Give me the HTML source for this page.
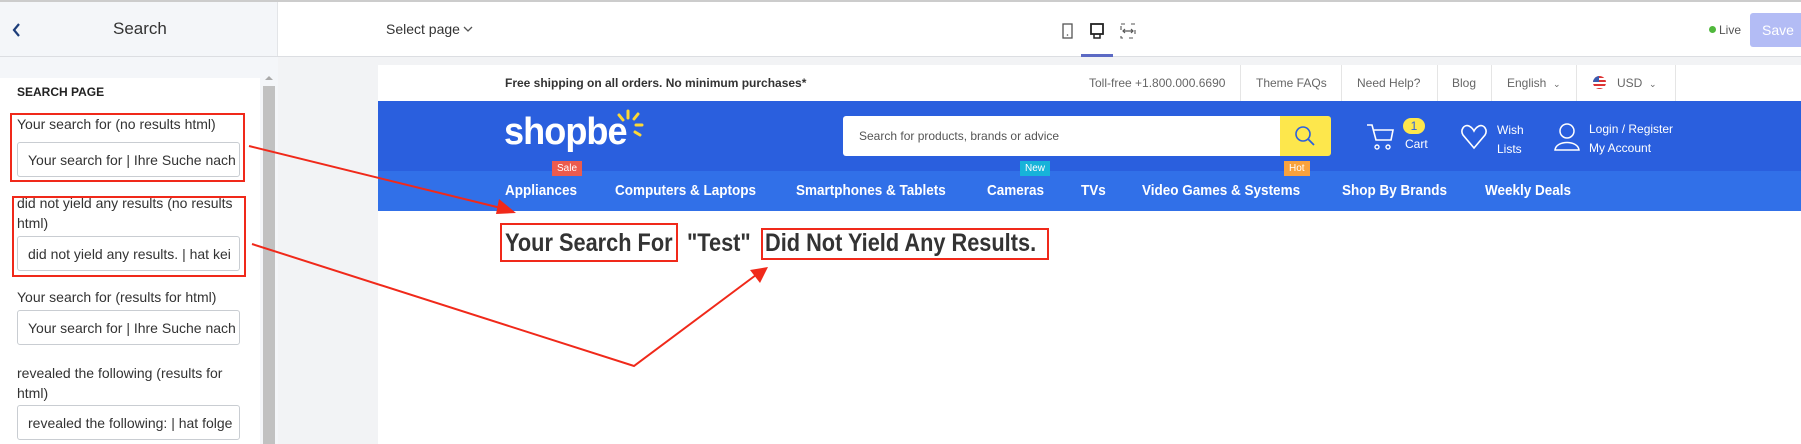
<!DOCTYPE html>
<html><head><meta charset="utf-8"><style>
*{margin:0;padding:0;box-sizing:border-box}
body{width:1801px;height:444px;overflow:hidden;position:relative;font-family:"Liberation Sans",Arial,sans-serif;background:#fff;color:#222}
.a{position:absolute;white-space:nowrap}
.lbl{font-size:14px;color:#333}
.inp{position:absolute;left:17px;width:223px;height:35px;border:1px solid #c9cdd2;border-radius:3px;background:#fff;font-size:14px;color:#333;padding:9px 0 0 10px;overflow:hidden;white-space:nowrap}
.nav{font-size:15px;font-weight:bold;color:#fff;top:182px;transform:scaleX(.9);transform-origin:left}
.tb{font-size:12px;color:#666;top:76px}
.dv{position:absolute;top:65px;width:1px;height:36px;background:#e5e5e5}
.badge{position:absolute;font-size:10px;color:#fff;padding:2px 5px;top:161px}
.h{position:absolute;top:229px;font-size:25px;font-weight:bold;color:#333;white-space:nowrap;transform:scaleX(.87);transform-origin:left}
</style></head><body>
<div class="a" style="left:0;top:0;width:1801px;height:2px;background:#ccc"></div>
<div class="a" style="left:0;top:2px;width:278px;height:55px;background:#f4f6f9;border-right:1px solid #e3e5e8"></div>
<div class="a" style="left:0;top:56px;width:1801px;height:1px;background:#dcdee2"></div>
<svg class="a" style="left:11px;top:22px" width="10" height="16"><path d="M8 2 L3 8 L8 14" stroke="#1c3d7a" stroke-width="2.2" fill="none"/></svg>
<div class="a" style="left:113px;top:19px;font-size:17px;color:#333">Search</div>
<div class="a" style="left:386px;top:21px;font-size:14px;color:#333">Select page</div>
<svg class="a" style="left:463px;top:25px" width="10" height="8"><path d="M1 2 L5 6 L9 2" stroke="#555" stroke-width="1.3" fill="none"/></svg>
<svg class="a" style="left:1058px;top:22px" width="80" height="20">
<rect x="5" y="2" width="9" height="14" fill="none" stroke="#555" stroke-width="1.3"/><circle cx="9.5" cy="13" r=".8" fill="#555"/>
<rect x="33" y="2" width="12" height="10" fill="none" stroke="#222" stroke-width="1.8"/><path d="M36 12 v4 h6 v-4" stroke="#222" stroke-width="1.5" fill="none"/>
<rect x="63" y="2" width="14" height="14" fill="none" stroke="#555" stroke-width="1.1" stroke-dasharray="4 6"/><path d="M65 9 h10 M67 7 l-2 2 2 2 M73 7 l2 2 -2 2" stroke="#555" stroke-width="1.2" fill="none"/>
</svg>
<div class="a" style="left:1081px;top:54px;width:32px;height:3px;background:#5c6ac4"></div>
<div class="a" style="left:1709px;top:26px;width:7px;height:7px;border-radius:50%;background:#50b83c"></div>
<div class="a" style="left:1719px;top:23px;font-size:12px;color:#555">Live</div>
<div class="a" style="left:1750px;top:13px;width:60px;height:34px;background:#b3bcf5;border-radius:3px;color:#fff;font-size:14px;padding:9px 0 0 12px">Save</div>
<div class="a" style="left:0;top:57px;width:278px;height:387px;background:#f4f6f9"></div>
<div class="a" style="left:0;top:78px;width:260px;height:366px;background:#fff"></div>
<div class="a" style="left:263px;top:86px;width:12px;height:358px;background:#c1c1c1"></div>
<svg class="a" style="left:265px;top:75px" width="8" height="6"><path d="M0 5 L4 1 L8 5Z" fill="#aaa"/></svg>
<div class="a" style="left:17px;top:85px;font-size:12px;font-weight:bold;color:#222">SEARCH PAGE</div>
<div class="a lbl" style="left:17px;top:116px">Your search for (no results html)</div>
<div class="inp" style="top:142px">Your search for | Ihre Suche nach</div>
<div class="a lbl" style="left:17px;top:195px">did not yield any results (no results</div>
<div class="a lbl" style="left:17px;top:215px">html)</div>
<div class="inp" style="top:236px">did not yield any results. | hat kei</div>
<div class="a lbl" style="left:17px;top:289px">Your search for (results for html)</div>
<div class="inp" style="top:310px">Your search for | Ihre Suche nach</div>
<div class="a lbl" style="left:17px;top:365px">revealed the following (results for</div>
<div class="a lbl" style="left:17px;top:385px">html)</div>
<div class="inp" style="top:405px">revealed the following: | hat folge</div>
<div class="a" style="left:278px;top:57px;width:1523px;height:387px;background:#f2f3f5"></div>
<div class="a" style="left:378px;top:65px;width:1423px;height:379px;background:#fff"></div>
<div class="a" style="left:505px;top:76px;font-size:12px;color:#333;font-weight:bold">Free shipping on all orders. No minimum purchases*</div>
<div class="a tb" style="left:1089px">Toll-free +1.800.000.6690</div>
<div class="dv" style="left:1240px"></div><div class="a tb" style="left:1256px">Theme FAQs</div>
<div class="dv" style="left:1341px"></div><div class="a tb" style="left:1357px">Need Help?</div>
<div class="dv" style="left:1437px"></div><div class="a tb" style="left:1452px">Blog</div>
<div class="dv" style="left:1491px"></div><div class="a tb" style="left:1507px">English&nbsp;&nbsp;<span style="font-size:9px">&#8964;</span></div>
<div class="dv" style="left:1576px"></div>
<div class="a" style="left:1593px;top:76px;width:13px;height:13px;border-radius:50%;background:repeating-linear-gradient(#d33 0 2px,#fff 2px 4px);overflow:hidden"><div style="width:6px;height:6px;background:#3b5bb0"></div></div>
<div class="a tb" style="left:1617px">USD&nbsp;&nbsp;<span style="font-size:9px">&#8964;</span></div>
<div class="dv" style="left:1675px"></div>
<div class="a" style="left:378px;top:101px;width:1423px;height:70px;background:#2a5fde"></div>
<div class="a" style="left:378px;top:171px;width:1423px;height:40px;background:#3170e8"></div>
<div class="a" style="left:504px;top:111px;font-size:38px;font-weight:bold;color:#fff;letter-spacing:-1px;transform:scaleX(.95);transform-origin:left">shopbe</div>
<svg class="a" style="left:612px;top:108px" width="40" height="35"><g stroke="#fdd835" stroke-width="3" stroke-linecap="round"><path d="M16 3 v7 M7 7 l4 5 M26 6 l-4 5 M30 17 h-6 M28 27 l-5 -3"/></g></svg>
<div class="a" style="left:843px;top:116px;width:437px;height:40px;background:#fff;border-radius:3px 0 0 3px;font-size:12px;color:#555;padding:13px 0 0 16px">Search for products, brands or advice</div>
<div class="a" style="left:1280px;top:116px;width:51px;height:40px;background:#fde74c;border-radius:0 3px 3px 0"></div>
<svg class="a" style="left:1293px;top:124px" width="26" height="26"><circle cx="10" cy="10" r="7" stroke="#2a5fde" stroke-width="1.6" fill="none"/><path d="M15 15 L21 21" stroke="#2a5fde" stroke-width="1.8"/></svg>
<svg class="a" style="left:1366px;top:122px" width="30" height="30"><path d="M1 3 h5 l4 15 h15 l2 -10 H8" stroke="#fff" stroke-width="1.6" fill="none"/><circle cx="11" cy="25" r="2" stroke="#fff" fill="none" stroke-width="1.4"/><circle cx="22" cy="25" r="2" stroke="#fff" fill="none" stroke-width="1.4"/></svg>
<div class="a" style="left:1403px;top:118px;width:22px;height:16px;border-radius:8px;background:#fde74c;color:#2a5fde;font-size:12px;text-align:center;line-height:16px">1</div>
<div class="a" style="left:1405px;top:137px;font-size:12px;color:#fff">Cart</div>
<svg class="a" style="left:1460px;top:123px" width="28" height="28"><path d="M14 25 L3 12 C0 7 4 1 9 3 C11 4 13 6 14 8 C15 6 17 4 19 3 C24 1 28 7 25 12 Z" stroke="#fff" stroke-width="1.6" fill="none"/></svg>
<div class="a" style="left:1497px;top:121px;font-size:12px;color:#fff;line-height:19px">Wish<br>Lists</div>
<svg class="a" style="left:1553px;top:122px" width="28" height="30"><circle cx="14" cy="9" r="7" stroke="#fff" stroke-width="1.5" fill="none"/><path d="M2 28 C3 18 25 18 26 28 Z" stroke="#fff" stroke-width="1.5" fill="none"/></svg>
<div class="a" style="left:1589px;top:120px;font-size:12px;color:#fff;line-height:19px">Login / Register<br>My Account</div>
<div class="a nav" style="left:505px">Appliances</div>
<div class="a nav" style="left:615px">Computers &amp; Laptops</div>
<div class="a nav" style="left:796px">Smartphones &amp; Tablets</div>
<div class="a nav" style="left:987px">Cameras</div>
<div class="a nav" style="left:1081px">TVs</div>
<div class="a nav" style="left:1142px">Video Games &amp; Systems</div>
<div class="a nav" style="left:1342px">Shop By Brands</div>
<div class="a nav" style="left:1485px">Weekly Deals</div>
<div class="badge" style="left:552px;background:#ec5b4d">Sale</div>
<div class="badge" style="left:1020px;background:#17b3d9">New</div>
<div class="badge" style="left:1284px;background:#f9a23d">Hot</div>
<div class="h" style="left:505px">Your Search For</div>
<div class="h" style="left:687px">"Test"</div>
<div class="h" style="left:765px">Did Not Yield Any Results.</div>
<svg class="a" style="left:0;top:0" width="1801" height="444">
<g fill="none" stroke="#f0291a" stroke-width="2">
<rect x="11" y="114" width="233" height="67"/>
<rect x="13" y="197" width="232" height="79"/>
<rect x="501" y="224" width="176" height="37"/>
<rect x="762" y="229" width="286" height="30"/>
<path d="M249 146 L505 209"/>
<path d="M252 244 L634 366 L760 272"/>
</g>
<path d="M516 213 L499 199 L496 214Z" fill="#f0291a"/>
<path d="M768 267 L750 270 L760 283Z" fill="#f0291a"/>
</svg>
</body></html>
